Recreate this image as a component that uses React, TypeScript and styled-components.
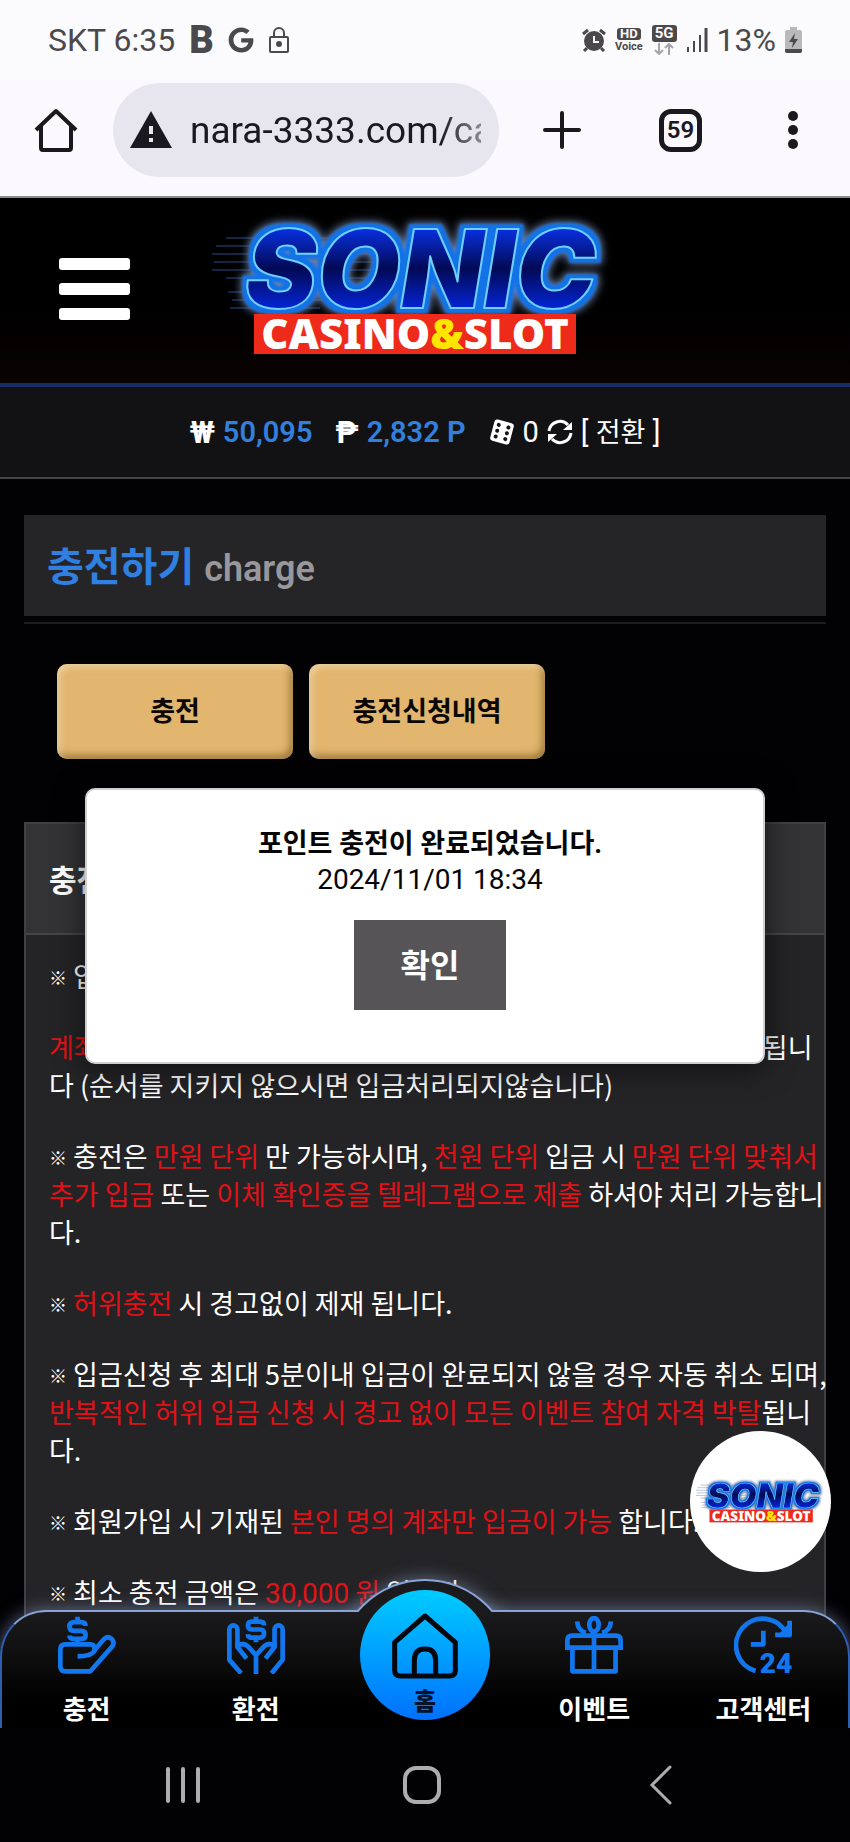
import React from 'react';
import styled, { createGlobalStyle } from 'styled-components';
import { FaGoogle } from 'react-icons/fa';

type NoticePart = string | { red: string } | { amount: string };

const notices: NoticePart[][] = [
    ['입금 전 반드시 계좌를 확인해 주시기 바랍니다.'],
    [
        '충전은 ', { red: '만원 단위' }, ' 만 가능하시며, ', { red: '천원 단위' }, ' 입금 시 ',
        { red: '만원 단위 맞춰서\n추가 입금' }, ' 또는 ', { red: '이체 확인증을 텔레그램으로 제출' }, ' 하셔야 처리 가능합니\n다.',
    ],
    [{ red: '허위충전' }, ' 시 경고없이 제재 됩니다.'],
    [
        '입금신청 후 최대 5분이내 입금이 완료되지 않을 경우 자동 취소 되며,\n',
        { red: '반복적인 허위 입금 신청 시 경고 없이 모든 이벤트 참여 자격 박탈' }, '됩니\n다.',
    ],
    ['회원가입 시 기재된 ', { red: '본인 명의 계좌만 입금이 가능' }, ' 합니다.'],
    ['최소 충전 금액은 ', { amount: '30,000' }, { red: ' 원' }, ' 입니다.'],
];

const orderNotice: NoticePart[] = [
    { red: '계좌문의 후 입금, 입금 후 충전신청' },
    ' 순서로 하셔야 바로 정상처리 됩니\n다 (순서를 지키지 않으시면 입금처리되지않습니다)',
];

const speedLines = [
    [14, 16, 130], [4, 24, 150], [0, 32, 180], [2, 40, 160], [0, 48, 190], [14, 56, 140],
    [16, 70, 130], [20, 78, 120], [18, 86, 90],
];

const renderPart = (part: NoticePart, idx: number) => {
    if (typeof part === 'string') return part;
    if ('amount' in part) return <RedAmount key={idx}>{part.amount}</RedAmount>;
    return <Red key={idx}>{part.red}</Red>;
};

const Logo = ({ id }: { id: string }) => (
    <LogoSvg viewBox="0 0 402 134" role="img" aria-label="SONIC CASINO&SLOT">
        <defs>
            <linearGradient id={`${id}-fill`} x1="0" y1="0" x2="0" y2="1">
                <stop offset="0.15" stopColor="#0a35f5" />
                <stop offset="0.5" stopColor="#020a55" />
                <stop offset="0.85" stopColor="#0428e8" />
            </linearGradient>
            <filter id={`${id}-glow`} x="-10%" y="-20%" width="120%" height="140%" colorInterpolationFilters="sRGB">
                <feMorphology in="SourceAlpha" operator="dilate" radius="5" result="wide" />
                <feGaussianBlur in="wide" stdDeviation="4" result="haze" />
                <feFlood floodColor="#6f86b0" />
                <feComposite in2="haze" operator="in" result="outer" />
                <feMorphology in="SourceAlpha" operator="dilate" radius="4" result="near" />
                <feGaussianBlur in="near" stdDeviation="1" result="edge" />
                <feFlood floodColor="#1272e6" />
                <feComposite in2="edge" operator="in" result="inner" />
                <feMerge>
                    <feMergeNode in="outer" />
                    <feMergeNode in="inner" />
                    <feMergeNode in="SourceGraphic" />
                </feMerge>
            </filter>
        </defs>
        <g stroke="#2a4a8a" strokeWidth="1">
            {speedLines.map(([x, y, w]) => <path key={y} d={`M${x} ${y}h${w}`} />)}
        </g>
        <LogoWord x="33" y="86" fill={`url(#${id}-fill)`} filter={`url(#${id}-glow)`}>SONIC</LogoWord>
        <rect x="42" y="92" width="322" height="40" fill="#ee2a1b" />
        <LogoTag x="203" y="127">CASINO<tspan fill="#ffe600">&amp;</tspan>SLOT</LogoTag>
    </LogoSvg>
);

const DepositIcon = () => (
    <NavSvg viewBox="0 0 172 172">
        <path d="M100 84H22Q7 84 7 99V148Q7 164 22 164H96L161 90Q169 78 159 68Q147 58 136 69L106 104" />
        <path d="M98 84Q112 88 108 104Q98 120 58 120" />
        <path d="M82 30Q82 18 68 18H48Q34 18 34 31T48 44H68Q82 44 82 56T68 68H48Q34 68 34 58M58 2V18M58 68V84" />
    </NavSvg>
);

const WithdrawIcon = () => (
    <NavSvg viewBox="0 0 172 172">
        <path d="M42 170 7 130V40a12 12 0 0 1 24 0V92L58 126M132 170 165 130V40a12 12 0 0 0-24 0V92L114 126" />
        <path d="M32 90Q46 76 62 90L86 116V172M140 90Q126 76 110 90L86 116" />
        <path d="M110 28Q110 17 98 17H74Q62 17 62 28T74 40H98Q110 40 110 52T98 64H74Q62 64 62 54M86 2V17M86 64V78" />
    </NavSvg>
);

const GiftIcon = () => (
    <NavSvg viewBox="0 0 172 172">
        <path d="M7 94V72Q7 58 21 58H151Q165 58 165 72V94M0 94H172M22 94V164H150V94M86 46V164" />
        <ellipse cx="86" cy="26" rx="14" ry="20" />
        <path d="M36 16Q38 44 62 50M136 16Q134 44 110 50" />
    </NavSvg>
);

const SupportIcon = () => (
    <NavSvg viewBox="0 0 172 172">
        <path d="M64 163A79 79 0 1 1 156 52M165 14V56H122M140 56 165 30M87 44V84H50" />
        <IconDigits x="76" y="170">24</IconDigits>
    </NavSvg>
);

const HomeIcon = () => (
    <HomeSvg viewBox="0 0 198 198">
        <path d="M8 88L99 9L190 88V172Q190 189 173 189H25Q8 189 8 172Z" />
        <path d="M67 189V142Q67 108 99 108T131 142V189" />
    </HomeSvg>
);

const Dice = () => (
    <svg width="26" height="26" viewBox="0 0 26 26" aria-hidden="true">
        <rect x="3" y="2" width="20" height="22" rx="3" fill="#fff" transform="rotate(15 13 13)" />
        <g fill="#121214" transform="rotate(15 13 13)">
            {[7, 13, 19].map(y => (
                <React.Fragment key={y}>
                    <circle cx="8" cy={y} r="2" />
                    <circle cx="18" cy={y} r="2" />
                </React.Fragment>
            ))}
        </g>
    </svg>
);

const Exchange = () => (
    <svg width="26" height="26" viewBox="0 0 26 26" fill="none" stroke="#fff" strokeWidth="3" aria-hidden="true">
        <path d="M2 12A11 11 0 0 1 21 6M24 14A11 11 0 0 1 5 20" />
        <path d="M25 3V11H16ZM1 23V15H10Z" fill="#fff" stroke="none" />
    </svg>
);

const navItems = [
    { label: '충전', icon: <DepositIcon /> },
    { label: '환전', icon: <WithdrawIcon /> },
    { label: '홈', icon: <HomeIcon />, home: true },
    { label: '이벤트', icon: <GiftIcon /> },
    { label: '고객센터', icon: <SupportIcon /> },
];

const App = () => (
    <Phone>
        <GlobalStyle />
        <StatusBar>
            <StatusGroup>
                <span>SKT 6:35</span>
                <BadgeB>B</BadgeB>
                <FaGoogle size={26} />
                <svg width="22" height="28" viewBox="0 0 22 28" fill="none" stroke="currentColor" strokeWidth="2">
                    <rect x="2" y="11" width="18" height="15" rx="1" />
                    <path d="M6 11V7a5 5 0 0 1 10 0v4" />
                    <circle cx="11" cy="18" r="2" fill="currentColor" />
                </svg>
            </StatusGroup>
            <StatusGroup tight>
                <svg width="24" height="24" viewBox="0 0 24 24" fill="none" stroke="currentColor" strokeWidth="2">
                    <circle cx="12" cy="13" r="9" fill="currentColor" />
                    <path d="M1 6 6 2M23 6 18 2M5 20 2 23M19 20 22 23" strokeWidth="3" />
                    <path d="M12 8v6h5" stroke="#fafafd" />
                </svg>
                <Stacked>
                    <Chip>HD</Chip>
                    <VoiceText>Voice</VoiceText>
                </Stacked>
                <Stacked>
                    <Chip large>5G</Chip>
                    <svg width="20" height="12" viewBox="0 0 20 12" fill="none" stroke="#a5a4a7" strokeWidth="2">
                        <path d="M5 0v11M1 7l4 4 4-4M15 12V1M11 5l4-4 4 4" />
                    </svg>
                </Stacked>
                <svg width="22" height="24" viewBox="0 0 22 24" stroke="currentColor" strokeWidth="2">
                    <path d="M2 19v5M8 13v11M14 7v17" />
                    <path d="M20 0v24" strokeWidth="3" />
                </svg>
                <span>13%</span>
                <svg width="17" height="26" viewBox="0 0 17 26">
                    <path d="M5 0h7v3h3q2 0 2 2v19q0 2-2 2H2q-2 0-2-2V5q0-2 2-2h3z" fill="#b9b8bb" />
                    <path d="M0 22h17v2q0 2-2 2H2q-2 0-2-2zM10 6 4 15h4l-1 6 6-9H9z" fill="#4b494c" />
                </svg>
            </StatusGroup>
        </StatusBar>
        <BrowserBar>
            <IconButton aria-label="Home">
                <svg width="44" height="44" viewBox="0 0 44 44" fill="none" stroke="#19191f" strokeWidth="4" strokeLinejoin="round">
                    <path d="M2 22 22 3 42 22M7 18V40Q7 42 9 42H35Q37 42 37 40V18" />
                </svg>
            </IconButton>
            <AddressBar>
                <svg width="42" height="38" viewBox="0 0 42 38" aria-hidden="true">
                    <path d="M21 0 42 37H0Z" fill="#19191f" />
                    <path d="M19 15h4v8h-4zM19 27h4v4h-4z" fill="#e7e6ef" />
                </svg>
                <AddressInput aria-label="Address" readOnly value="nara-3333.com/casino" />
            </AddressBar>
            <IconButton aria-label="New tab">
                <svg width="38" height="38" viewBox="0 0 38 38" stroke="#19191f" strokeWidth="4" strokeLinecap="round">
                    <path d="M19 2v34M2 19h34" />
                </svg>
            </IconButton>
            <TabsButton>59</TabsButton>
            <IconButton aria-label="Menu">
                <svg width="10" height="40" viewBox="0 0 10 40" fill="#19191f">
                    <circle cx="5" cy="6" r="5" />
                    <circle cx="5" cy="20" r="5" />
                    <circle cx="5" cy="34" r="5" />
                </svg>
            </IconButton>
        </BrowserBar>
        <Site>
            <SiteHeader>
                <Burger aria-label="Menu">
                    <BurgerLine />
                    <BurgerLine />
                    <BurgerLine />
                </Burger>
                <HeaderLogo href="#">
                    <Logo id="header" />
                </HeaderLogo>
            </SiteHeader>
            <BalanceBar>
                <BalanceGroup>
                    <Currency>₩</Currency>
                    <Amount>50,095</Amount>
                </BalanceGroup>
                <BalanceGroup>
                    <Currency>₱</Currency>
                    <Amount>2,832 P</Amount>
                </BalanceGroup>
                <BalanceGroup>
                    <Dice />
                    <span>0</span>
                    <Exchange />
                    <ConvertLink href="#">[ <Hangul>전환</Hangul> ]</ConvertLink>
                </BalanceGroup>
            </BalanceBar>
            <Content>
                <TitleBox>
                    <Title>충전하기 <TitleSub>charge</TitleSub></Title>
                </TitleBox>
                <TabRow>
                    <TabButton>충전</TabButton>
                    <TabButton>충전신청내역</TabButton>
                </TabRow>
                <Panel>
                    <PanelHeader>충전안내</PanelHeader>
                    <Notices>
                        {notices.map((parts, idx) => (
                            <React.Fragment key={idx}>
                                <p><Mark>※</Mark> {parts.map(renderPart)}</p>
                                {idx === 0 && <p>{orderNotice.map(renderPart)}</p>}
                            </React.Fragment>
                        ))}
                    </Notices>
                </Panel>
            </Content>
            <Modal role="dialog" aria-label="포인트 충전이 완료되었습니다.">
                <ModalTitle>포인트 충전이 완료되었습니다.</ModalTitle>
                <ModalDate>2024/11/01 18:34</ModalDate>
                <ConfirmButton>확인</ConfirmButton>
            </Modal>
            <FloatingBadge href="#">
                <Logo id="badge" />
            </FloatingBadge>
            <BottomNav>
                <Bump />
                {navItems.map(item => (
                    <NavItem key={item.label} href="#" home={item.home}>
                        {item.icon}
                        <span>{item.label}</span>
                    </NavItem>
                ))}
            </BottomNav>
        </Site>
        <SystemNav>
            <IconButton aria-label="Recents">
                <svg width="34" height="38" viewBox="0 0 34 38" stroke="#aeacae" strokeWidth="4" strokeLinecap="round">
                    <path d="M2 3v32M17 3v32M32 3v32" />
                </svg>
            </IconButton>
            <IconButton aria-label="Home">
                <svg width="38" height="38" viewBox="0 0 38 38" fill="none" stroke="#aeacae" strokeWidth="4">
                    <rect x="2" y="2" width="34" height="34" rx="11" />
                </svg>
            </IconButton>
            <IconButton aria-label="Back">
                <svg width="24" height="40" viewBox="0 0 24 40" fill="none" stroke="#aeacae" strokeWidth="3" strokeLinecap="round">
                    <path d="M21 2 3 20l18 18" />
                </svg>
            </IconButton>
        </SystemNav>
    </Phone>
);

const GlobalStyle = createGlobalStyle`
    *, *::before, *::after {
        box-sizing: border-box;
    }
    body {
        margin: 0;
        background: #000;
        font-family: Roboto, 'Noto Sans CJK KR', sans-serif;
    }
    p, h1, h2 {
        margin: 0;
    }
    button {
        font-family: inherit;
        border: none;
        padding: 0;
    }
    a {
        color: inherit;
        text-decoration: none;
    }
`;

const Phone = styled.div`
    min-height: 100vh;
    display: flex;
    flex-direction: column;
`;

const StatusBar = styled.div`
    height: 80px;
    padding: 0 48px;
    display: flex;
    align-items: center;
    justify-content: space-between;
    background: #fbfafd;
    color: #4b494c;
    font-size: 32px;
`;

const StatusGroup = styled.div<{ tight?: boolean }>`
    display: flex;
    align-items: center;
    gap: ${p => p.tight ? 9 : 14}px;
`;

const BadgeB = styled.span`
    font-size: 38px;
    line-height: 32px;
    font-weight: 900;
`;

const Stacked = styled.span`
    display: flex;
    flex-direction: column;
    align-items: center;
    gap: 1px;
`;

const Chip = styled.span<{ large?: boolean }>`
    padding: 0 3px;
    border-radius: 3px;
    background: #4b494c;
    color: #fbfafd;
    font-size: ${p => p.large ? 15 : 13}px;
    line-height: ${p => p.large ? 17 : 12}px;
    font-weight: 700;
`;

const VoiceText = styled.span`
    font-size: 11px;
    line-height: 11px;
    font-weight: 700;
`;

const BrowserBar = styled.div`
    height: 118px;
    padding: 0 52px 16px 34px;
    display: flex;
    align-items: center;
    background: #fbf9fe;
    border-bottom: 2px solid #8a898f;
`;

const IconButton = styled.button`
    background: none;
    display: flex;
    align-items: center;
    justify-content: center;
`;

const AddressBar = styled.div`
    flex: 1;
    min-width: 0;
    height: 94px;
    margin: 0 44px 0 35px;
    padding: 0 18px 0 17px;
    border-radius: 47px;
    background: #e7e6ef;
    display: flex;
    align-items: center;
    gap: 18px;
`;

const AddressInput = styled.input`
    flex: 1;
    min-width: 0;
    padding: 0;
    border: none;
    outline: none;
    background: none;
    color: #19191f;
    font-family: Roboto, sans-serif;
    font-size: 37px;
    mask-image: linear-gradient(to right, #000 86%, rgba(0, 0, 0, 0.45));
`;

const TabsButton = styled.button`
    width: 43px;
    height: 43px;
    margin: 0 86px 0 78px;
    border: 5px solid #19191f;
    border-radius: 12px;
    background: none;
    color: #19191f;
    font-size: 24px;
    line-height: 32px;
    font-weight: 600;
`;

const Site = styled.main`
    position: relative;
    flex: 1;
    display: flex;
    flex-direction: column;
    overflow: hidden;
    background: #020104;
    color: #fff;
`;

const SiteHeader = styled.header`
    height: 189px;
    padding-bottom: 4px;
    display: grid;
    grid-template-columns: 1fr 402px 1fr;
    align-items: center;
    border-bottom: 4px solid #1a2c66;
    background: linear-gradient(#000 60%, #0a0203);
`;

const Burger = styled.button`
    width: 71px;
    margin-left: 59px;
    background: none;
    display: flex;
    flex-direction: column;
    gap: 13px;
`;

const BurgerLine = styled.span`
    height: 12px;
    border-radius: 3px;
    background: #fff;
`;

const HeaderLogo = styled.a`
    margin: 0 12px 0 -12px;
`;

const LogoSvg = styled.svg`
    display: block;
    width: 100%;
    overflow: visible;
`;

const LogoWord = styled.text`
    font-family: Inter, sans-serif;
    font-size: 108px;
    font-weight: 900;
    font-style: italic;
    stroke: #6fd0ff;
    stroke-width: 2;
    stroke-linejoin: round;
`;

const LogoTag = styled.text`
    font-family: 'Noto Sans', sans-serif;
    font-size: 42px;
    font-weight: 900;
    fill: #fff;
    text-anchor: middle;
`;

const BalanceBar = styled.div`
    height: 92px;
    display: flex;
    align-items: center;
    justify-content: center;
    gap: 23px;
    background: #121214;
    border-bottom: 2px solid #454447;
    font-size: 29px;
`;

const BalanceGroup = styled.div`
    display: flex;
    align-items: center;
    gap: 8px;
`;

const Currency = styled.span`
    font-weight: 700;
    font-size: 31px;
`;

const Amount = styled.span`
    color: #3280dc;
    font-weight: 600;
`;

const ConvertLink = styled.a`
    line-height: 32px;
`;

const Hangul = styled.span`
    font-size: 27px;
`;

const Content = styled.div`
    flex: 1;
    display: flex;
    flex-direction: column;
    padding: 36px 24px 0;
`;

const TitleBox = styled.div`
    border-bottom: 2px solid #1d1c1e;
    padding-bottom: 6px;
`;

const Title = styled.h1`
    height: 101px;
    padding-left: 23px;
    background: #252427;
    color: #2f80e0;
    font-size: 40px;
    line-height: 106px;
    font-weight: 700;
`;

const TitleSub = styled.small`
    color: #98979b;
    font-size: 36px;
    font-weight: 600;
`;

const TabRow = styled.div`
    display: flex;
    gap: 16px;
    padding: 40px 33px 63px;
`;

const TabButton = styled.button`
    width: 236px;
    height: 95px;
    padding-bottom: 4px;
    border-radius: 10px;
    background: #e2b66e;
    box-shadow: inset 3px 3px 6px rgba(255, 240, 215, 0.5), inset -3px -4px 7px rgba(90, 60, 10, 0.5);
    color: #0c0704;
    font-size: 27px;
    font-weight: 700;
`;

const Panel = styled.section`
    flex: 1;
    border: 2px solid #403f42;
    border-bottom: none;
    background: #242326;
`;

const PanelHeader = styled.h2`
    height: 111px;
    padding-left: 23px;
    border-bottom: 2px solid #454447;
    background: #333235;
    font-size: 30px;
    line-height: 114px;
    font-weight: 700;
`;

const Notices = styled.div`
    display: flex;
    flex-direction: column;
    gap: 33px;
    margin-right: -12px;
    padding: 22px 0 0 23px;
    font-family: 'Noto Sans CJK KR', sans-serif;
    font-size: 27px;
    line-height: 38px;
    white-space: pre-line;
`;

const Mark = styled.span`
    font-size: 18px;
    line-height: 18px;
    font-weight: 900;
    vertical-align: 2px;
`;

const Red = styled.span`
    color: #e01217;
`;

const RedAmount = styled(Red)`
    font-family: Roboto, sans-serif;
    font-size: 28px;
    line-height: 28px;
`;

const Modal = styled.div`
    position: absolute;
    top: 590px;
    left: 10%;
    right: 10%;
    padding: 36px 0 52px 10px;
    border: 2px solid #d0ced1;
    border-radius: 10px;
    background: #fff;
    box-shadow: 0 4px 30px rgba(0, 0, 0, 0.6);
    color: #050505;
    display: flex;
    flex-direction: column;
    align-items: center;
`;

const ModalTitle = styled.h2`
    font-size: 27px;
    line-height: 36px;
    font-weight: 700;
`;

const ModalDate = styled.p`
    font-size: 28px;
    line-height: 36px;
`;

const ConfirmButton = styled.button`
    width: 152px;
    height: 90px;
    margin-top: 22px;
    padding-bottom: 4px;
    background: #565457;
    color: #fff;
    font-size: 32px;
    font-weight: 700;
`;

const FloatingBadge = styled.a`
    position: absolute;
    right: 19px;
    bottom: 156px;
    width: 141px;
    height: 141px;
    padding: 6px;
    border-radius: 50%;
    background: #fff;
    display: flex;
    align-items: center;
`;

const BottomNav = styled.nav`
    position: absolute;
    left: 0;
    right: 0;
    bottom: 0;
    height: 118px;
    display: grid;
    grid-template-columns: repeat(5, 1fr);
    border: 2px solid #2d5fb0;
    border-top-color: #89a4d6;
    border-bottom: none;
    border-radius: 46px 46px 0 0;
    background: linear-gradient(#1b1b1d, #000 80%);
    box-shadow: 0 0 18px rgba(140, 160, 200, 0.6);
`;

const Bump = styled.div`
    position: absolute;
    left: 50%;
    top: -33px;
    width: 178px;
    height: 178px;
    margin-left: -89px;
    border: 2px solid #89a4d6;
    border-radius: 50%;
    background: #1b1b1d;
    box-shadow: 0 0 18px rgba(140, 160, 200, 0.6);
    clip-path: inset(-20px -20px 145px -20px);
`;

const NavItem = styled.a<{ home?: boolean }>`
    position: relative;
    display: flex;
    flex-direction: column;
    align-items: center;
    justify-self: center;
    gap: ${p => p.home ? 5 : 18}px;
    padding-top: ${p => p.home ? 23 : 4}px;
    width: ${p => p.home ? '130px' : 'auto'};
    height: ${p => p.home ? '130px' : 'auto'};
    margin-top: ${p => p.home ? -22 : 0}px;
    border-radius: ${p => p.home ? '50%' : '0'};
    background: ${p => p.home ? 'linear-gradient(#00ccff, #0071ff)' : 'none'};
    color: ${p => p.home ? '#05142c' : '#fff'};
    font-size: ${p => p.home ? 24 : 26}px;
    line-height: 36px;
    font-weight: ${p => p.home ? 900 : 700};
`;

const NavSvg = styled.svg`
    width: 58px;
    height: 58px;
    fill: none;
    stroke: #1277ee;
    stroke-width: 14;
    stroke-linejoin: round;
`;

const IconDigits = styled.text`
    font-size: 84px;
    font-weight: 900;
    fill: #1277ee;
    stroke: none;
`;

const HomeSvg = styled.svg`
    width: 66px;
    height: 66px;
    fill: none;
    stroke: #05070c;
    stroke-width: 15;
    stroke-linejoin: round;
`;

const SystemNav = styled.footer`
    height: 114px;
    padding: 0 70px 0 64px;
    display: grid;
    grid-template-columns: repeat(3, 1fr);
    align-items: center;
    background: #020104;
`;

export default App;
